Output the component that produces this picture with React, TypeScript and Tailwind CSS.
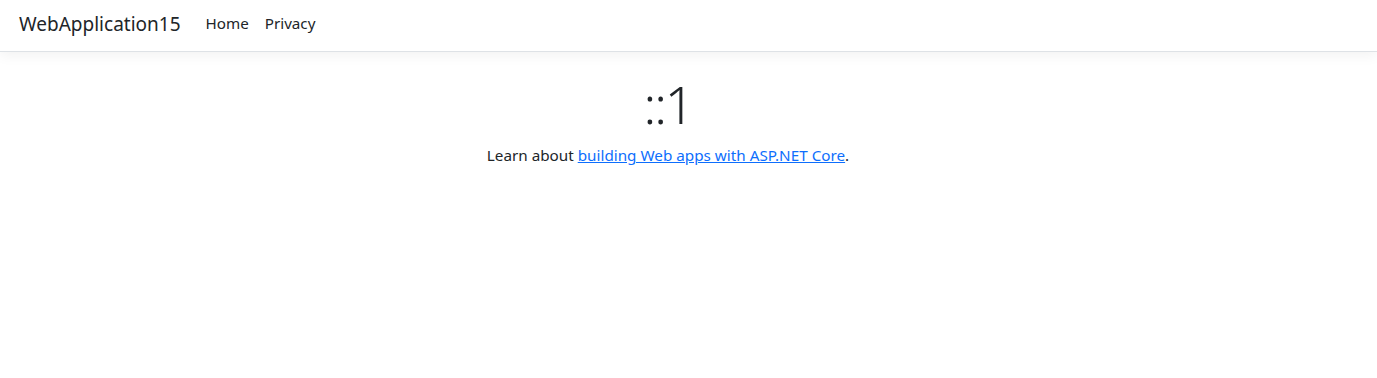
export default function App() {
  return (
    <div className="min-h-[378px] bg-white text-[#212529]" style={{ fontFamily: '"Noto Sans", "Open Sans", sans-serif' }}>
      <header className="h-[52px] border-b border-[#dee2e6] bg-white shadow-[0_4px_12px_rgba(0,0,0,0.05)] flex items-center px-[19px] pb-[4px]">
        <a className="text-[19px] leading-[30px] mr-[25px]">WebApplication15</a>
        <nav className="flex gap-[16px] text-[15.2px]">
          <a>Home</a>
          <a>Privacy</a>
        </nav>
      </header>
      <main className="flex flex-col items-center pt-[21px] pr-[41px]">
        <h1 className="text-[52px] font-light leading-[1.2] tracking-[-2px]">::1</h1>
        <p className="text-[15.25px] mt-[9px]">
          Learn about{" "}
          <a className="text-[#0d6efd] underline">building Web apps with ASP.NET Core</a>.
        </p>
      </main>
    </div>
  );
}
